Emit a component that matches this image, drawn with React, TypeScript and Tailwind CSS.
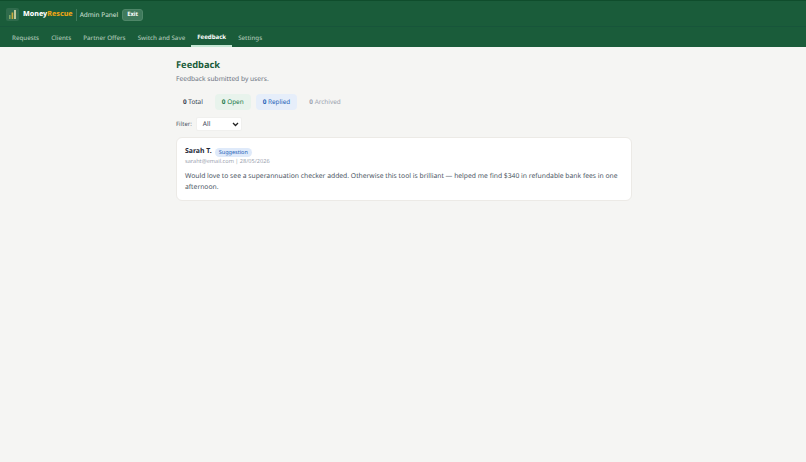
export default function App() {
  const tabs = ["Requests", "Clients", "Partner Offers", "Switch and Save", "Feedback", "Settings"];
  return (
    <div className="min-h-[462px] bg-[#f5f5f3] font-['Noto_Sans',sans-serif] [text-rendering:geometricPrecision] opacity-[0.999]">
      <header className="bg-[#1a5c3a] border-t border-[#0f4d2c]">
        <div className="flex items-center h-[26px] pt-[2px] pl-[6px] border-b border-[#17553a]">
          <div className="w-[13px] h-[13px] rounded-[2px] bg-[#2f6b4c] flex items-center justify-center">
            <svg width="11" height="11" viewBox="0 0 11 11">
              <rect x="2" y="6" width="1.6" height="4" fill="#7fa86a" />
              <rect x="4.6" y="3.5" width="1.6" height="6.5" fill="#c9a93a" />
              <rect x="7.2" y="1" width="1.6" height="9" fill="#e3dfae" />
            </svg>
          </div>
          <span className="ml-[4px] text-[7.1px] font-extrabold text-white">Money<span className="text-[#e8a317]">Rescue</span></span>
          <span className="ml-[3px] h-[12px] border-l border-[#3f7a5c]" />
          <span className="ml-[3px] text-[6.5px] text-[#d5e3da]">Admin Panel</span>
          <span className="ml-[4px] w-[21px] justify-center h-[12px] flex items-center rounded-[3px] bg-[#3f7a5c] border border-[#4f8769] text-[5.8px] font-bold text-white">Exit</span>
        </div>
        <nav className="flex h-[20px] pl-[6px]">
          {tabs.map((t) => (
            <span key={t} className={t === "Feedback" ? "px-[6px] pt-[1px] flex items-center text-[6.1px] font-bold text-white border-b-2 border-[#c4e6d3]" : "px-[6px] pt-[1px] flex items-center text-[6.2px] font-medium text-[#a9c4b4]"}>{t}</span>
          ))}
        </nav>
      </header>
      <main className="w-[456px] ml-[176px] pt-[11px]">
        <h1 className="text-[9.3px] font-bold text-[#1a5c3a] leading-[14px]">Feedback</h1>
        <p className="mt-[1px] text-[6.65px] text-[#6b7280] leading-[12px]">Feedback submitted by users.</p>
        <div className="mt-[9px] flex gap-[5px] text-[6.4px] leading-[10px]">
          <span className="px-[7px] py-[3px] h-[16px] text-[#374151] rounded-[4px]"><b>0</b> Total</span>
          <span className="px-[7px] py-[3px] h-[16px] bg-[#e8f3ec] text-[#1a7a4a] rounded-[4px]"><b>0</b> Open</span>
          <span className="px-[7px] py-[3px] h-[16px] bg-[#e6eefa] text-[#2563b8] rounded-[4px]"><b>0</b> Replied</span>
          <span className="px-[7px] py-[3px] h-[16px] text-[#9ca3af] rounded-[4px]"><b>0</b> Archived</span>
        </div>
        <div className="mt-[7px] flex items-center gap-[4px]">
          <span className="text-[6px] text-[#4b5563]">Filter:</span>
          <div className="w-[46px] h-[14px] bg-white rounded-[2px] border border-[#f0f0ee] flex items-center justify-between pl-[6px] pr-[2px] text-[6.5px] text-[#374151]">
            <span>All</span>
            <svg width="7" height="5" viewBox="0 0 7 5"><path d="M1 1l2.5 2.5L6 1" fill="none" stroke="#222" strokeWidth="1.3" /></svg>
          </div>
        </div>
        <article className="mt-[6px] h-[64px] bg-white rounded-[6px] border border-[#eceae6] px-[8px] pt-[8px]">
          <div className="flex items-center gap-[3px] pt-[1px]">
            <span className="text-[6.9px] font-bold text-[#1f2937]">Sarah T.</span>
            <span className="px-[4px] h-[9px] rounded-full bg-[#dfeafa] text-[5.5px] text-[#2563b8] flex items-center">Suggestion</span>
          </div>
          <div className="text-[5.6px] text-[#9ca3af]">saraht@email.com | 28/05/2026</div>
          <p className="mt-[4px] text-[6.78px] leading-[11px] text-[#4b5563]">Would love to see a superannuation checker added. Otherwise this tool is brilliant — helped me find $340 in refundable bank fees in one afternoon.</p>
        </article>
      </main>
    </div>
  );
}
